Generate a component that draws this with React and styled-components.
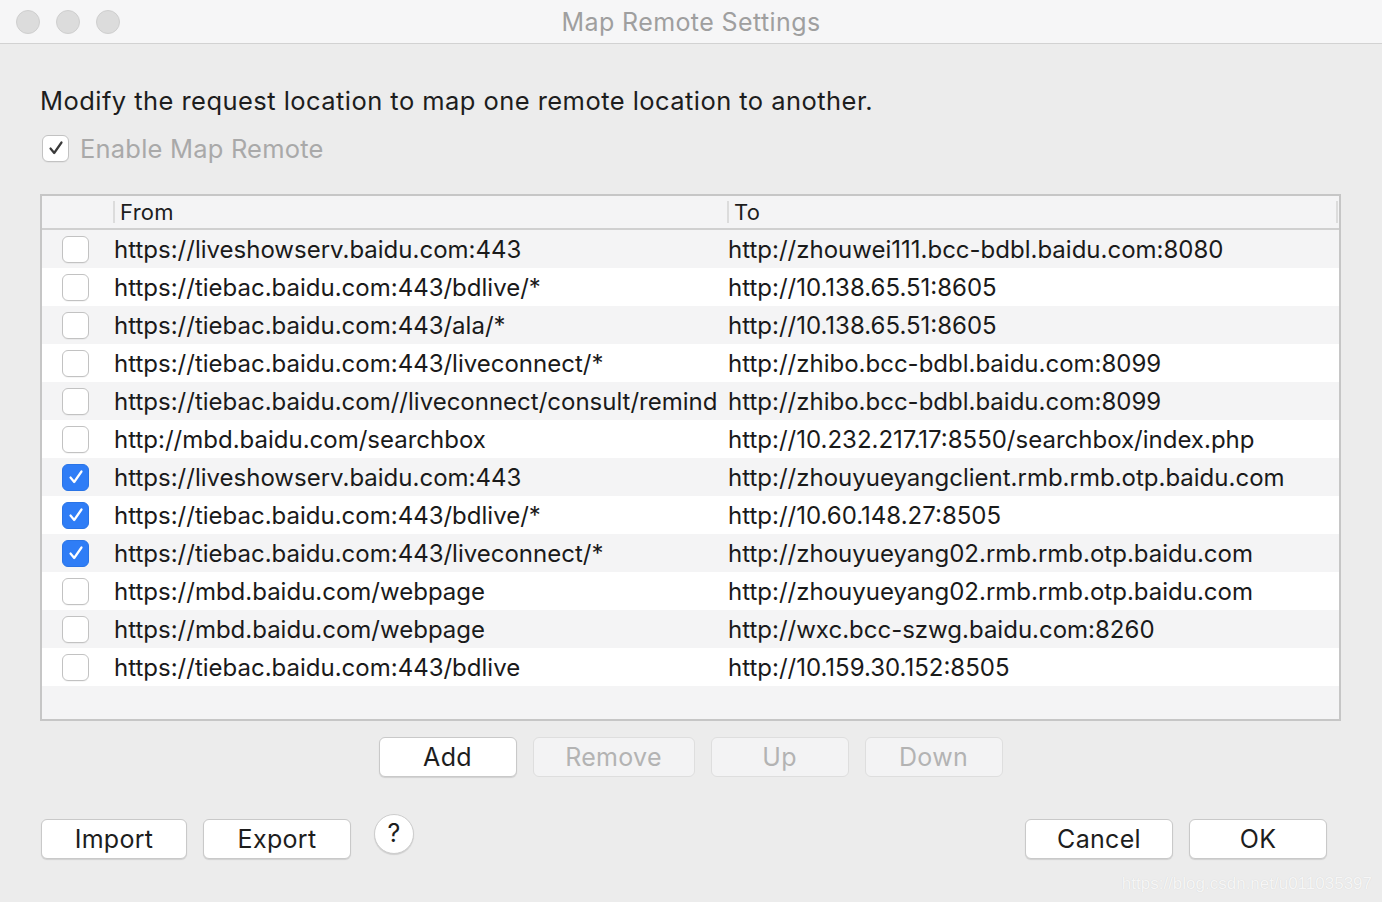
import React from "react";
import styled, { createGlobalStyle } from "styled-components";

const GlobalStyle = createGlobalStyle`
  html, body {
    margin: 0;
    padding: 0;
    background: #ececec;
  }
  body {
    font-family: Inter, "Liberation Sans", sans-serif;
    -webkit-font-smoothing: antialiased;
  }
`;

const rows = [
    {on: false, from: "https://liveshowserv.baidu.com:443", to: "http://zhouwei111.bcc-bdbl.baidu.com:8080"},
    {on: false, from: "https://tiebac.baidu.com:443/bdlive/*", to: "http://10.138.65.51:8605"},
    {on: false, from: "https://tiebac.baidu.com:443/ala/*", to: "http://10.138.65.51:8605"},
    {on: false, from: "https://tiebac.baidu.com:443/liveconnect/*", to: "http://zhibo.bcc-bdbl.baidu.com:8099"},
    {on: false, from: "https://tiebac.baidu.com//liveconnect/consult/remind", to: "http://zhibo.bcc-bdbl.baidu.com:8099"},
    {on: false, from: "http://mbd.baidu.com/searchbox", to: "http://10.232.217.17:8550/searchbox/index.php"},
    {on: true, from: "https://liveshowserv.baidu.com:443", to: "http://zhouyueyangclient.rmb.rmb.otp.baidu.com"},
    {on: true, from: "https://tiebac.baidu.com:443/bdlive/*", to: "http://10.60.148.27:8505"},
    {on: true, from: "https://tiebac.baidu.com:443/liveconnect/*", to: "http://zhouyueyang02.rmb.rmb.otp.baidu.com"},
    {on: false, from: "https://mbd.baidu.com/webpage", to: "http://zhouyueyang02.rmb.rmb.otp.baidu.com"},
    {on: false, from: "https://mbd.baidu.com/webpage", to: "http://wxc.bcc-szwg.baidu.com:8260"},
    {on: false, from: "https://tiebac.baidu.com:443/bdlive", to: "http://10.159.30.152:8505"},
];

const Window = styled.div`
  width: 1382px;
  height: 902px;
  background: #ececec;
  display: flex;
  flex-direction: column;
  overflow: hidden;
  position: relative;
`;

const TitleBar = styled.div`
  height: 43px;
  flex: none;
  background: #f6f6f7;
  border-bottom: 1px solid #d2d2d2;
  display: flex;
  align-items: center;
  padding-left: 16px;
  position: relative;
`;

const Lights = styled.div`
  display: flex;
  gap: 16px;
`;

const Light = styled.span`
  width: 24px;
  height: 24px;
  box-sizing: border-box;
  border-radius: 50%;
  background: #dcdcdc;
  border: 1px solid #cfcfcf;
`;

const Title = styled.div`
  position: absolute;
  left: 0;
  right: 0;
  top: 0;
  height: 43px;
  line-height: 45px;
  text-align: center;
  font-size: 25px;
  letter-spacing: 0.4px;
  color: #9f9f9f;
  pointer-events: none;
`;

const Content = styled.div`
  padding: 0 41px 0 40px;
  display: flex;
  flex-direction: column;
`;

const Intro = styled.div`
  margin-top: 41px;
  font-size: 25.5px;
  letter-spacing: 0.45px;
  line-height: 32px;
  color: #1d1d1d;
`;

const EnableRow = styled.label`
  margin-top: 15px;
  display: flex;
  align-items: center;
  gap: 11px;
  margin-left: 2px;
  font-size: 25.5px;
  letter-spacing: 0.2px;
  color: #a9a9a9;
  height: 32px;
`;

const Box = styled.span`
  width: ${p => p.size || 26}px;
  height: ${p => p.size || 26}px;
  box-sizing: border-box;
  border-radius: 6px;
  flex: none;
  display: flex;
  align-items: center;
  justify-content: center;
  background: ${p => (p.checked && !p.dim ? "#2f7df6" : "#ffffff")};
  border: 1px solid ${p => (p.checked && !p.dim ? "#2a74e6" : "#c2c2c2")};
  box-shadow: ${p => (p.checked && !p.dim ? "none" : "0 1px 0 rgba(0,0,0,0.04)")};
`;

const Check = ({color}) => (
    <svg width="18" height="18" viewBox="0 0 18 18">
        <path d="M3.5 9.5 L7.2 14 L14.5 3.5" fill="none" stroke={color} strokeWidth="2.2"
              strokeLinecap="round" strokeLinejoin="round"/>
    </svg>
);

const Table = styled.div`
  margin-top: 30px;
  height: 527px;
  box-sizing: border-box;
  border: 2px solid #c6c6c6;
  background: #f4f4f5;
  display: flex;
  flex-direction: column;
`;

const HeaderRow = styled.div`
  height: 34px;
  flex: none;
  box-sizing: border-box;
  border-bottom: 2px solid #d0d0d0;
  display: grid;
  grid-template-columns: 71px 614px 1fr;
  align-items: center;
  background: #f4f4f5;
  font-size: 22px;
  letter-spacing: 0.3px;
  color: #1d1d1d;
`;

const HeadCell = styled.div`
  height: 22px;
  line-height: 22px;
  padding-left: ${p => (p.empty ? 0 : 5)}px;
  border-left: ${p => (p.empty ? "none" : "2px solid #dcdcdc")};
  border-right: ${p => (p.last ? "2px solid #dcdcdc" : "none")};
  margin-right: ${p => (p.last ? 1 : 0)}px;
`;

const Row = styled.div`
  height: 38px;
  flex: none;
  display: grid;
  grid-template-columns: 71px 614px 1fr;
  align-items: center;
  background: ${p => (p.odd ? "#ffffff" : "#f4f4f5")};
  font-size: 24px;
  color: #1a1a1a;
  white-space: nowrap;
`;

const CheckCell = styled.div`
  display: flex;
  justify-content: flex-start;
  padding-left: 20px;
`;

const Cell = styled.div`
  overflow: hidden;
  padding-left: 1px;
`;

const ButtonRow = styled.div`
  margin-top: 16px;
  display: flex;
  justify-content: center;
  gap: 16px;
`;

const Button = styled.button`
  width: ${p => p.w}px;
  height: 40px;
  box-sizing: border-box;
  border-radius: 6px;
  font-family: inherit;
  font-size: 25px;
  letter-spacing: 0.3px;
  padding: 0;
  background: ${p => (p.disabled ? "#f3f3f4" : "#ffffff")};
  color: ${p => (p.disabled ? "#b3b3b3" : "#1d1d1d")};
  border: 1px solid ${p => (p.disabled ? "#dedede" : "#c9c9c9")};
  box-shadow: ${p => (p.disabled ? "none" : "0 1px 1px rgba(0,0,0,0.12)")};
`;

const Footer = styled.div`
  margin-top: 42px;
  display: flex;
  align-items: flex-start;
  padding-left: 1px;
`;

const FooterLeft = styled.div`
  display: flex;
  gap: 16px;
  align-items: flex-start;
`;

const FooterRight = styled.div`
  margin-left: auto;
  display: flex;
  gap: 16px;
  padding-right: 14px;
`;

const Help = styled.button`
  width: 40px;
  height: 40px;
  margin-top: -5px;
  margin-left: 7px;
  border-radius: 50%;
  box-sizing: border-box;
  background: #ffffff;
  border: 1px solid #cdcdcd;
  box-shadow: 0 1px 1px rgba(0,0,0,0.12);
  font-family: inherit;
  font-size: 25px;
  color: #1d1d1d;
  padding: 0 0 2px 0;
`;

const Watermark = styled.div`
  position: absolute;
  right: 10px;
  bottom: 8px;
  font-family: "Liberation Sans", Arial, sans-serif;
  font-size: 17px;
  color: #f6f6f6;
  text-shadow: 0 0 1px rgba(0,0,0,0.12);
`;

const App = () => {
    return (
        <Window>
            <GlobalStyle/>
            <TitleBar>
                <Lights>
                    <Light/>
                    <Light/>
                    <Light/>
                </Lights>
                <Title>Map Remote Settings</Title>
            </TitleBar>
            <Content>
                <Intro>Modify the request location to map one remote location to another.</Intro>
                <EnableRow>
                    <Box checked dim size={27}><Check color="#3a3a3a"/></Box>
                    Enable Map Remote
                </EnableRow>
                <Table>
                    <HeaderRow>
                        <HeadCell empty/>
                        <HeadCell>From</HeadCell>
                        <HeadCell last>To</HeadCell>
                    </HeaderRow>
                    {rows.map((r, i) => (
                        <Row key={i} odd={i % 2 === 1}>
                            <CheckCell>
                                <Box checked={r.on} size={27}>{r.on && <Check color="#ffffff"/>}</Box>
                            </CheckCell>
                            <Cell>{r.from}</Cell>
                            <Cell>{r.to}</Cell>
                        </Row>
                    ))}
                </Table>
                <ButtonRow>
                    <Button w={138}>Add</Button>
                    <Button w={162} disabled>Remove</Button>
                    <Button w={138} disabled>Up</Button>
                    <Button w={138} disabled>Down</Button>
                </ButtonRow>
                <Footer>
                    <FooterLeft>
                        <Button w={146}>Import</Button>
                        <Button w={148}>Export</Button>
                        <Help>?</Help>
                    </FooterLeft>
                    <FooterRight>
                        <Button w={148}>Cancel</Button>
                        <Button w={138}>OK</Button>
                    </FooterRight>
                </Footer>
            </Content>
            <Watermark>https://blog.csdn.net/u011035397</Watermark>
        </Window>
    );
};

export default App;
